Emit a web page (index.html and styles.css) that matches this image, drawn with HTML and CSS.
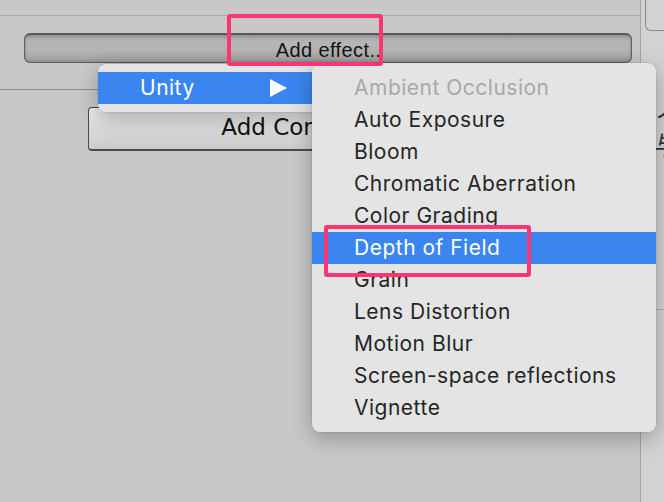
FILE: index.html
```html
<!DOCTYPE html>
<html>
<head>
<meta charset="utf-8">
<link rel="stylesheet" href="styles.css">
</head>
<body>
<div class="window">
  <div class="main">
    <div class="topline"></div>
    <div class="effect-row">
      <div class="effect-bar">Add effect..</div>
    </div>
    <div class="divider"></div>
    <div class="component-row">
      <div class="component-btn">Add Component</div>
    </div>
  </div>
  <div class="side">
    <div class="side-box"></div>
    <div class="side-glyphs">
      <span class="glyph g1">ノ</span>
      <span class="glyph g2">与</span>
    </div>
    <div class="side-line"></div>
  </div>

  <div class="menu menu-root">
    <div class="item active">
      <span class="label">Unity</span>
      <svg class="arrow" width="17" height="18" viewBox="0 0 17 18"><path d="M0 0 L17 9 L0 18 Z" fill="#fff"/></svg>
    </div>
  </div>

  <div class="menu menu-sub">
    <div class="item disabled">Ambient Occlusion</div>
    <div class="item">Auto Exposure</div>
    <div class="item">Bloom</div>
    <div class="item">Chromatic Aberration</div>
    <div class="item">Color Grading</div>
    <div class="item active">Depth of Field</div>
    <div class="item">Grain</div>
    <div class="item">Lens Distortion</div>
    <div class="item">Motion Blur</div>
    <div class="item">Screen-space reflections</div>
    <div class="item">Vignette</div>
  </div>

  <div class="mark mark-effect"></div>
  <div class="mark mark-dof"></div>
</div>
</body>
</html>
```

FILE: styles.css
```css
html, body {
  margin: 0;
  padding: 0;
}
body {
  width: 664px;
  height: 502px;
  overflow: hidden;
  background: #c8c8c8;
  font-family: "Inter", "Noto Sans", sans-serif;
}
.window {
  position: relative;
  display: flex;
  width: 664px;
  height: 502px;
}
.main {
  width: 640px;
  border-right: 1px solid #a6a6a6;
  background: #c8c8c8;
}
.topline {
  height: 15px;
  border-bottom: 1px solid #a8a8a8;
}
.effect-row {
  padding: 17px 8px 0 24px;
}
.effect-bar {
  height: 24px;
  border: 1px solid #5e5e5e;
  border-top: 2px solid #5a5a5a;
  border-radius: 6px;
  background: linear-gradient(#9c9c9c 0%, #b6b6b6 25%, #b4b4b4 60%, #9e9e9e 100%);
  box-shadow: inset 0 0 3px rgba(0,0,0,0.25);
  display: flex;
  align-items: center;
  justify-content: center;
  padding-left: 1px;
  padding-top: 3px;
  font-family: "Liberation Sans", "Noto Sans", sans-serif;
  font-size: 20px;
  letter-spacing: 0.4px;
  color: #141414;
  line-height: 24px;
}
.divider {
  margin-top: 26px;
  height: 0;
  border-bottom: 1px solid #8e8e8e;
}
.component-row {
  padding: 17px 0 0 88px;
}
.component-btn {
  width: 450px;
  height: 38px;
  padding-bottom: 3px;
  border: 1px solid #4a4a4a;
  border-bottom-width: 2px;
  border-radius: 4px;
  background: linear-gradient(#ececec, #cbcbcb);
  display: flex;
  align-items: center;
  justify-content: center;
  font-family: "DejaVu Sans", "Liberation Sans", sans-serif;
  font-size: 23px;
  color: #111;
}
.side {
  flex: 1;
  background: #d2d2d2;
  position: relative;
  overflow: hidden;
}
.side-box {
  margin: 0 0 0 4px;
  height: 30px;
  border: 1px solid #8a8a8a;
  border-top: none;
  border-right: none;
  border-radius: 0 0 0 6px;
}
.side-glyphs {
  display: flex;
  flex-direction: column;
  padding: 62px 0 0 13px;
  gap: 6px;
  font-family: "Noto Sans CJK JP", sans-serif;
  font-size: 24px;
  line-height: 30px;
  color: #333;
}
.side-line {
  margin-top: 150px;
  border-bottom: 1px solid #b0b0b0;
}
.menu {
  position: absolute;
  background: #e4e4e4;
  border-radius: 8px;
  box-shadow: 0 6px 22px rgba(0,0,0,0.28), 0 0 0 0.5px rgba(0,0,0,0.12);
  padding: 8px 0;
  font-family: "Inter", "Noto Sans", sans-serif;
  font-size: 21px;
  letter-spacing: 0.5px;
  color: #262626;
}
.menu-root {
  left: 98px;
  top: 64px;
  width: 230px;
}
.menu-root .item {
  display: flex;
  align-items: center;
  padding-left: 42px;
}
.menu-root .label {
  width: 130px;
}
.menu-sub {
  left: 312px;
  top: 63px;
  width: 344px;
  padding: 9px 0 8px;
}
.item {
  height: 32px;
  line-height: 32px;
  padding-left: 42px;
  white-space: nowrap;
}
.item.active {
  background: #3a85ef;
  color: #fff;
}
.item.disabled {
  color: #a8a8a8;
}
.mark {
  position: absolute;
  border: 4px solid #fb3570;
  border-radius: 3px;
  box-sizing: border-box;
}
.mark-effect {
  left: 227px;
  top: 14px;
  width: 156px;
  height: 52px;
}
.mark-dof {
  left: 324px;
  top: 225px;
  width: 207px;
  height: 52px;
}
```
